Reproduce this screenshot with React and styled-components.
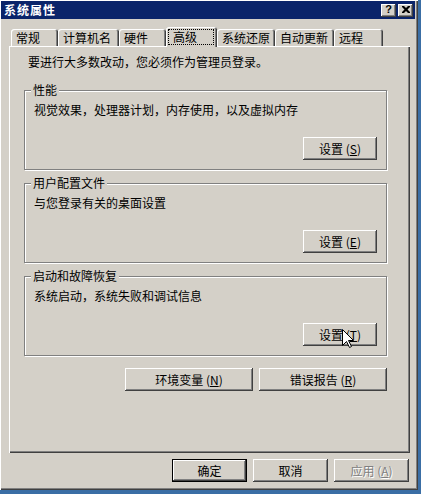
import styled, { createGlobalStyle } from "styled-components"

const GlobalStyle = createGlobalStyle`
html, body {
    margin: 0;
    padding: 0;
}
body {
    background: #3a6ea5;
    font-family: "Noto Sans CJK SC", "Liberation Sans", sans-serif;
    font-size: 12px;
    color: #000000;
}
`

const tabs = [
    { label: "常规", w: 47 },
    { label: "计算机名", w: 61 },
    { label: "硬件", w: 47 },
    { label: "高级", w: 51, active: true },
    { label: "系统还原", w: 58 },
    { label: "自动更新", w: 59 },
    { label: "远程", w: 49 },
]

const groups = [
    { title: "性能", text: "视觉效果，处理器计划，内存使用，以及虚拟内存", key: "S" },
    { title: "用户配置文件", text: "与您登录有关的桌面设置", key: "E" },
    { title: "启动和故障恢复", text: "系统启动，系统失败和调试信息", key: "T", cursor: true },
]

export default function App() {
    return (
        <>
            <GlobalStyle />
            <Window>
                <TitleBar>
                    <Title>系统属性</Title>
                    <CaptionButton>?</CaptionButton>
                    <CaptionButton $gap={2}>
                        <svg width="8" height="7" viewBox="0 0 8 7">
                            <path d="M0 0h2l2 2 2-2h2v1L5.5 3.5 8 6v1H6L4 5 2 7H0V6l2.5-2.5L0 1z" fill="#000" />
                        </svg>
                    </CaptionButton>
                </TitleBar>

                <Body>
                    <TabRow>
                        {tabs.map(t => (
                            <Tab key={t.label} $w={t.w} $active={t.active}>
                                {t.active ? <FocusRing>{t.label}</FocusRing> : t.label}
                            </Tab>
                        ))}
                    </TabRow>

                    <Panel>
                        <Intro>要进行大多数改动，您必须作为管理员登录。</Intro>

                        <Groups>
                            {groups.map(g => (
                                <GroupBox key={g.title}>
                                    <GroupLabel>{g.title}</GroupLabel>
                                    <Description>{g.text}</Description>
                                    <PushButton $w={74} $end>
                                        设置 (<u>{g.key}</u>)
                                        {g.cursor && (
                                            <Cursor width="12" height="19" viewBox="0 0 12 19">
                                                <path d="M0.5 0.5V16.5L4.5 12.5L7.5 18.5L9.5 17.5L6.5 11.5H11.5Z" fill="#fff" stroke="#000" />
                                            </Cursor>
                                        )}
                                    </PushButton>
                                </GroupBox>
                            ))}
                        </Groups>

                        <ExtraRow>
                            <PushButton $w={128}>环境变量 (<u>N</u>)</PushButton>
                            <PushButton $w={128}>错误报告 (<u>R</u>)</PushButton>
                        </ExtraRow>
                    </Panel>

                    <Footer>
                        <PushButton $w={75} $default>确定</PushButton>
                        <PushButton $w={75}>取消</PushButton>
                        <PushButton $w={75} disabled>应用 (<u>A</u>)</PushButton>
                    </Footer>
                </Body>
            </Window>
        </>
    )
}

const Window = styled.div`
box-sizing: border-box;
width: 418px;
height: 490px;
padding: 1px 3px 3px 1px;
background: #d4d0c8;
box-shadow: inset 1px 1px #ffffff, inset -1px -1px #404040, inset -2px -2px #808080;
display: flex;
flex-direction: column;
`
const TitleBar = styled.div`
height: 18px;
background: #0a246a;
display: flex;
align-items: center;
padding: 0 2px 0 3px;
`
const Title = styled.div`
flex: 1;
color: #ffffff;
font-weight: 700;
font-size: 12px;
letter-spacing: 1px;
line-height: 14px;
`
const CaptionButton = styled.div`
box-sizing: border-box;
width: 15px;
height: 13px;
margin-left: ${p => p.$gap || 0}px;
background: #d4d0c8;
box-shadow: inset -1px -1px #404040, inset 1px 1px #ffffff, inset -2px -2px #808080;
display: flex;
align-items: center;
justify-content: center;
font-family: "Liberation Sans", sans-serif;
font-weight: 700;
font-size: 11px;
line-height: 11px;
padding-bottom: 1px;
`
const Body = styled.div`
padding: 8px 0 0 8px;
display: flex;
flex-direction: column;
`
const TabRow = styled.div`
display: flex;
align-items: flex-end;
height: 19px;
margin-left: 2px;
position: relative;
z-index: 1;
`
const Tab = styled.div`
box-sizing: border-box;
width: ${p => p.$w}px;
height: ${p => (p.$active ? 20 : 17)}px;
margin-bottom: ${p => (p.$active ? -1 : 0)}px;
padding: ${p => (p.$active ? "2px 3px 0 2px" : "2px 0 0 5px")};
background: #d4d0c8;
border-radius: 3px 3px 0 0;
box-shadow: inset 1px 1px #ffffff, inset -1px 0 #404040, inset -2px 0 #808080;
line-height: 14px;
white-space: nowrap;
`
const FocusRing = styled.span`
display: block;
box-sizing: border-box;
height: 16px;
padding-left: 4px;
border: 1px dotted #000000;
line-height: 14px;
`
const Panel = styled.div`
box-sizing: border-box;
width: 401px;
height: 407px;
padding: 9px 0 0 15px;
box-shadow: inset 1px 1px #ffffff, inset -1px -1px #404040, inset -2px -2px #808080;
display: flex;
flex-direction: column;
`
const Intro = styled.div`
padding-left: 4px;
line-height: 14px;
`
const Groups = styled.div`
width: 363px;
margin-top: 21px;
display: flex;
flex-direction: column;
gap: 13px;
`
const GroupBox = styled.div`
position: relative;
box-sizing: border-box;
height: 80px;
padding: 12px 9px 9px 9px;
border: 1px solid #808080;
box-shadow: 1px 1px #ffffff, inset 1px 1px #ffffff;
display: flex;
flex-direction: column;
`
const GroupLabel = styled.span`
position: absolute;
top: -8px;
left: 6px;
padding: 0 2px;
background: #d4d0c8;
line-height: 14px;
`
const Description = styled.div`
line-height: 14px;
`
const PushButton = styled.button`
position: relative;
box-sizing: border-box;
width: ${p => p.$w}px;
height: 23px;
padding: 0;
margin-top: ${p => (p.$end ? "auto" : "0")};
align-self: ${p => (p.$end ? "flex-end" : "auto")};
border: ${p => (p.$default ? "1px solid #000000" : "none")};
background: #d4d0c8;
font-family: inherit;
font-size: 12px;
line-height: 14px;
color: ${p => (p.disabled ? "#808080" : "#000000")};
text-shadow: ${p => (p.disabled ? "1px 1px #ffffff" : "none")};
box-shadow: inset -1px -1px #404040, inset 1px 1px #ffffff, inset -2px -2px #808080;
u {
    text-decoration: underline;
    text-underline-offset: 1px;
}
`
const Cursor = styled.svg`
position: absolute;
left: 39px;
top: 6px;
display: block;
`
const ExtraRow = styled.div`
width: 363px;
margin-top: 12px;
display: flex;
justify-content: flex-end;
gap: 6px;
`
const Footer = styled.div`
box-sizing: border-box;
width: 401px;
margin-top: 6px;
padding-right: 1px;
display: flex;
justify-content: flex-end;
gap: 6px;
`
